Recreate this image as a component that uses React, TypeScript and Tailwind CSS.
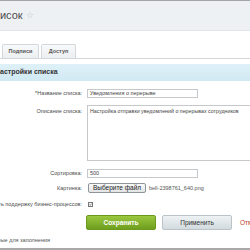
export default function App() {
  const label = "w-[85px] shrink-0 flex justify-end pr-[3px] whitespace-nowrap text-[#4a4a4a] text-[5.5px]";
  return (
    <div className="w-[250px] h-[250px] overflow-hidden bg-white text-[6px] font-['Liberation_Sans',Arial,sans-serif]">
      {/* title */}
      <div className="h-[31px] border-t border-b border-t-[#a5a5a5] border-b-[#e1e5e8] bg-[#eef1f4] flex items-center">
        <div className="-ml-[14px] text-[11px] text-[#4d4d4d] whitespace-nowrap flex items-center">
          Список
          <span className="ml-[3px] text-[9px] text-[#b9c0c6]">☆</span>
        </div>
      </div>

      {/* tabs */}
      <div className="h-[28px] border-b border-[#d3d7da] flex items-end pl-[2px] gap-[2px]">
        <div className="w-[37px] h-[14px] border border-b-0 border-[#d3d8db] rounded-t-[2px] bg-gradient-to-b from-[#f8f9fa] to-[#eceff1] flex items-center justify-center text-[5.5px] font-bold text-[#555]">
          Подписи
        </div>
        <div className="w-[35px] h-[14px] border border-b-0 border-[#d3d8db] rounded-t-[2px] bg-gradient-to-b from-[#f8f9fa] to-[#eceff1] flex items-center justify-center text-[5.5px] font-bold text-[#555]">
          Доступ
        </div>
      </div>

      {/* section header */}
      <div className="mt-[5px] h-[17px] bg-gradient-to-b from-[#dff1f8] to-[#d0e9f3] flex items-center">
        <span className="-ml-[5px] text-[7px] font-bold text-[#333] whitespace-nowrap">Настройки списка</span>
      </div>

      {/* form */}
      <div className="flex items-center mt-[8px] h-[9px]">
        <div className={label}>*Название списка:</div>
        <div className="ml-[2px] w-[111px] shrink-0 h-[9px] border border-[#c5c9cc] flex items-center px-[2px] text-[5.5px] text-[#444]">
          Уведомления о перерыве
        </div>
      </div>

      <div className="flex mt-[7px]">
        <div className={label + " pt-[2px]"}>Описание списка:</div>
        <div className="ml-[2px] w-[200px] shrink-0 h-[56px] border border-[#c5c9cc] px-[2px] pt-[2px] text-[5.3px] text-[#444] whitespace-nowrap">
          Настройка отправки уведомлений о перерывах сотрудников
        </div>
      </div>

      <div className="flex items-center mt-[8px] h-[9px]">
        <div className={label}>Сортировка:</div>
        <div className="ml-[2px] w-[111px] shrink-0 h-[9px] border border-[#c5c9cc] flex items-center px-[2px] text-[5.5px] text-[#444]">
          500
        </div>
      </div>

      <div className="flex items-center mt-[5px] h-[10px]">
        <div className={label}>Картинка:</div>
        <div className="ml-[3px] w-[58px] shrink-0 h-[10px] border border-[#8f9498] rounded-[2px] bg-gradient-to-b from-[#fafafa] to-[#e2e4e6] flex items-center justify-center text-[6.5px] text-[#222]">
          Выберите файл
        </div>
        <span className="ml-[3px] text-[5.5px] text-[#555] whitespace-nowrap">bell-2398761_640.png</span>
      </div>

      <div className="flex items-center mt-[8px] h-[7px]">
        <div className={label}>Включить поддержку бизнес-процессов:</div>
        <div className="ml-[3px] w-[5px] h-[5px] shrink-0 border border-[#777] bg-white flex items-center justify-center">
          <svg viewBox="0 0 10 10" className="w-[5px] h-[5px]">
            <path d="M1.5 5.2 L4 7.8 L8.8 2" fill="none" stroke="#222" strokeWidth="2" />
          </svg>
        </div>
      </div>

      {/* buttons */}
      <div className="flex items-center mt-[7px] pl-[86px] h-[15px]">
        <div className="w-[70px] shrink-0 h-[15px] rounded-[2px] bg-gradient-to-b from-[#9bc83f] to-[#6e9e1e] border border-[#6b9a1d] flex items-center justify-center text-[6.5px] font-bold text-white">
          Сохранить
        </div>
        <div className="ml-[6px] w-[70px] shrink-0 h-[15px] rounded-[2px] bg-gradient-to-b from-[#eef2f4] to-[#d2dbdf] border border-[#b9c3c8] flex items-center justify-center text-[6.5px] text-[#333]">
          Применить
        </div>
        <span className="ml-[8px] shrink-0 text-[6.5px] text-[#c0392b] whitespace-nowrap">Отменить</span>
      </div>

      <div className="mt-[6px] w-[50px] flex justify-end whitespace-nowrap text-[5.5px] text-[#555]">
        Поля, обязательные для заполнения
      </div>

      <div className="mt-[4px] h-[2px] bg-[#a8a8a8]" />
    </div>
  );
}
